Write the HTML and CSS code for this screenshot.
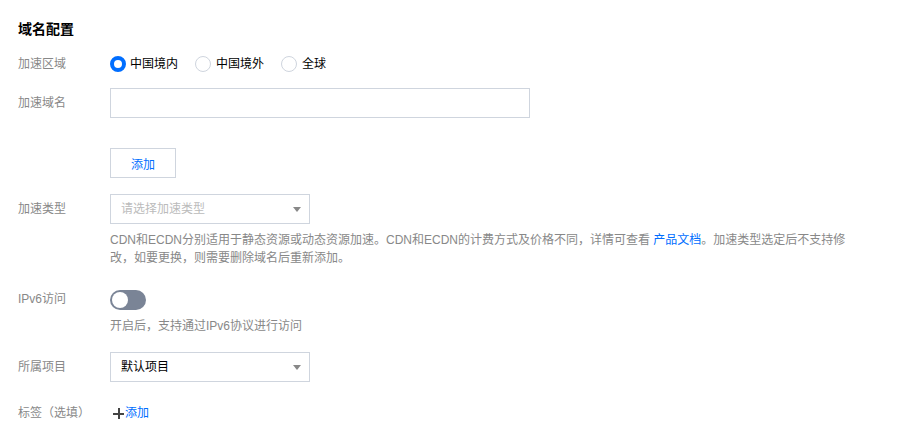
FILE: index.html
```html
<!DOCTYPE html>
<html lang="zh-CN">
<head>
<meta charset="utf-8">
<link rel="stylesheet" href="styles.css">
</head>
<body>
<div class="page">
  <h2 class="title">域名配置</h2>

  <div class="row row-region">
    <div class="label">加速区域</div>
    <div class="control radios">
      <label class="radio"><span class="dot checked"></span>中国境内</label>
      <label class="radio"><span class="dot"></span>中国境外</label>
      <label class="radio"><span class="dot"></span>全球</label>
    </div>
  </div>

  <div class="row row-domain">
    <div class="label tall">加速域名</div>
    <div class="control">
      <div class="input wide"></div>
      <button class="btn">添加</button>
    </div>
  </div>

  <div class="row row-type">
    <div class="label tall">加速类型</div>
    <div class="control">
      <div class="select placeholder">请选择加速类型<span class="caret"></span></div>
      <p class="help">CDN和ECDN分别适用于静态资源或动态资源加速。CDN和ECDN的计费方式及价格不同，详情可查看 <a class="link">产品文档</a>。加速类型选定后不支持修改，如要更换，则需要删除域名后重新添加。</p>
    </div>
  </div>

  <div class="row row-ipv6">
    <div class="label mid">IPv6访问</div>
    <div class="control">
      <div class="switch"><span class="knob"></span></div>
      <p class="help">开启后，支持通过IPv6协议进行访问</p>
    </div>
  </div>

  <div class="row row-project">
    <div class="label tall">所属项目</div>
    <div class="control">
      <div class="select">默认项目<span class="caret"></span></div>
    </div>
  </div>

  <div class="row row-tag">
    <div class="label line">标签（选填）</div>
    <div class="control">
      <a class="add-link"><span class="plus"></span>添加</a>
    </div>
  </div>
</div>
</body>
</html>
```
FILE: styles.css
```css
* { box-sizing: border-box; }
html, body { margin: 0; padding: 0; background: #fff; }
body {
  font-family: "Liberation Sans", "Noto Sans CJK SC", sans-serif;
  font-size: 12px;
  color: #000;
}
.page { padding: 19px 18px 0 18px; }
.title {
  margin: 0;
  font-size: 14px;
  line-height: 20px;
  font-weight: bold;
  color: #000;
}
.row { display: flex; }
.label {
  width: 92px;
  flex: none;
  color: #888;
  line-height: 20px;
}
.label.tall { line-height: 30px; }
.label.mid { line-height: 18px; }
.label.line { line-height: 18px; }
.control { flex: 1; min-width: 0; }

.row-region { margin-top: 15px; }
.radios { display: flex; gap: 0; height: 20px; align-items: center; }
.radio { display: flex; align-items: center; margin-right: 17px; color: #000; line-height: 20px; }
.dot {
  width: 16px; height: 16px; border-radius: 50%;
  border: 1px solid #cfd5de; margin-right: 5px; background: #fff;
}
.dot.checked { border: 4px solid #006eff; margin-right: 4px; }

.row-domain { margin-top: 14px; }
.input {
  height: 30px;
  border: 1px solid #cfd5de;
  background: #fff;
}
.input.wide { width: 420px; }
.btn {
  display: block;
  margin-top: 30px;
  width: 66px;
  height: 30px;
  background: #fff;
  border: 1px solid #cfd5de;
  color: #006eff;
  font: inherit;
  font-size: 12px;
  padding: 0;
}

.row-type { margin-top: 16px; }
.select {
  position: relative;
  width: 200px;
  height: 30px;
  border: 1px solid #cfd5de;
  line-height: 28px;
  padding-left: 10px;
  color: #000;
}
.select.placeholder { color: #bbb; }
.caret {
  position: absolute;
  right: 8px;
  top: 12px;
  width: 0; height: 0;
  border-left: 4.5px solid transparent;
  border-right: 4.5px solid transparent;
  border-top: 5px solid #888;
}
.help {
  margin: 7px 0 0 0;
  color: #888;
  line-height: 18px;
  max-width: 750px;
}
.link { color: #006eff; text-decoration: none; }

.row-ipv6 { margin-top: 23px; }
.row-ipv6 .label { padding-top: 0; line-height: 18px; }
.switch {
  position: relative;
  width: 36px; height: 20px;
  border-radius: 10px;
  background: #7a8496;
}
.knob {
  position: absolute;
  left: 2px; top: 2px;
  width: 16px; height: 16px;
  border-radius: 50%;
  background: #fff;
}

.row-project { margin-top: 17px; }
.row-tag { margin-top: 22px; }
.add-link { display: inline-flex; align-items: center; color: #006eff; line-height: 18px; }
.plus {
  position: relative;
  width: 11px; height: 11px;
  margin-left: 3px;
  margin-right: 1px;
}
.plus::before, .plus::after {
  content: "";
  position: absolute;
  background: #444;
}
.plus::before { left: 0; right: 0; top: 5px; height: 2px; }
.plus::after { top: 0; bottom: 0; left: 5px; width: 2px; }
```
